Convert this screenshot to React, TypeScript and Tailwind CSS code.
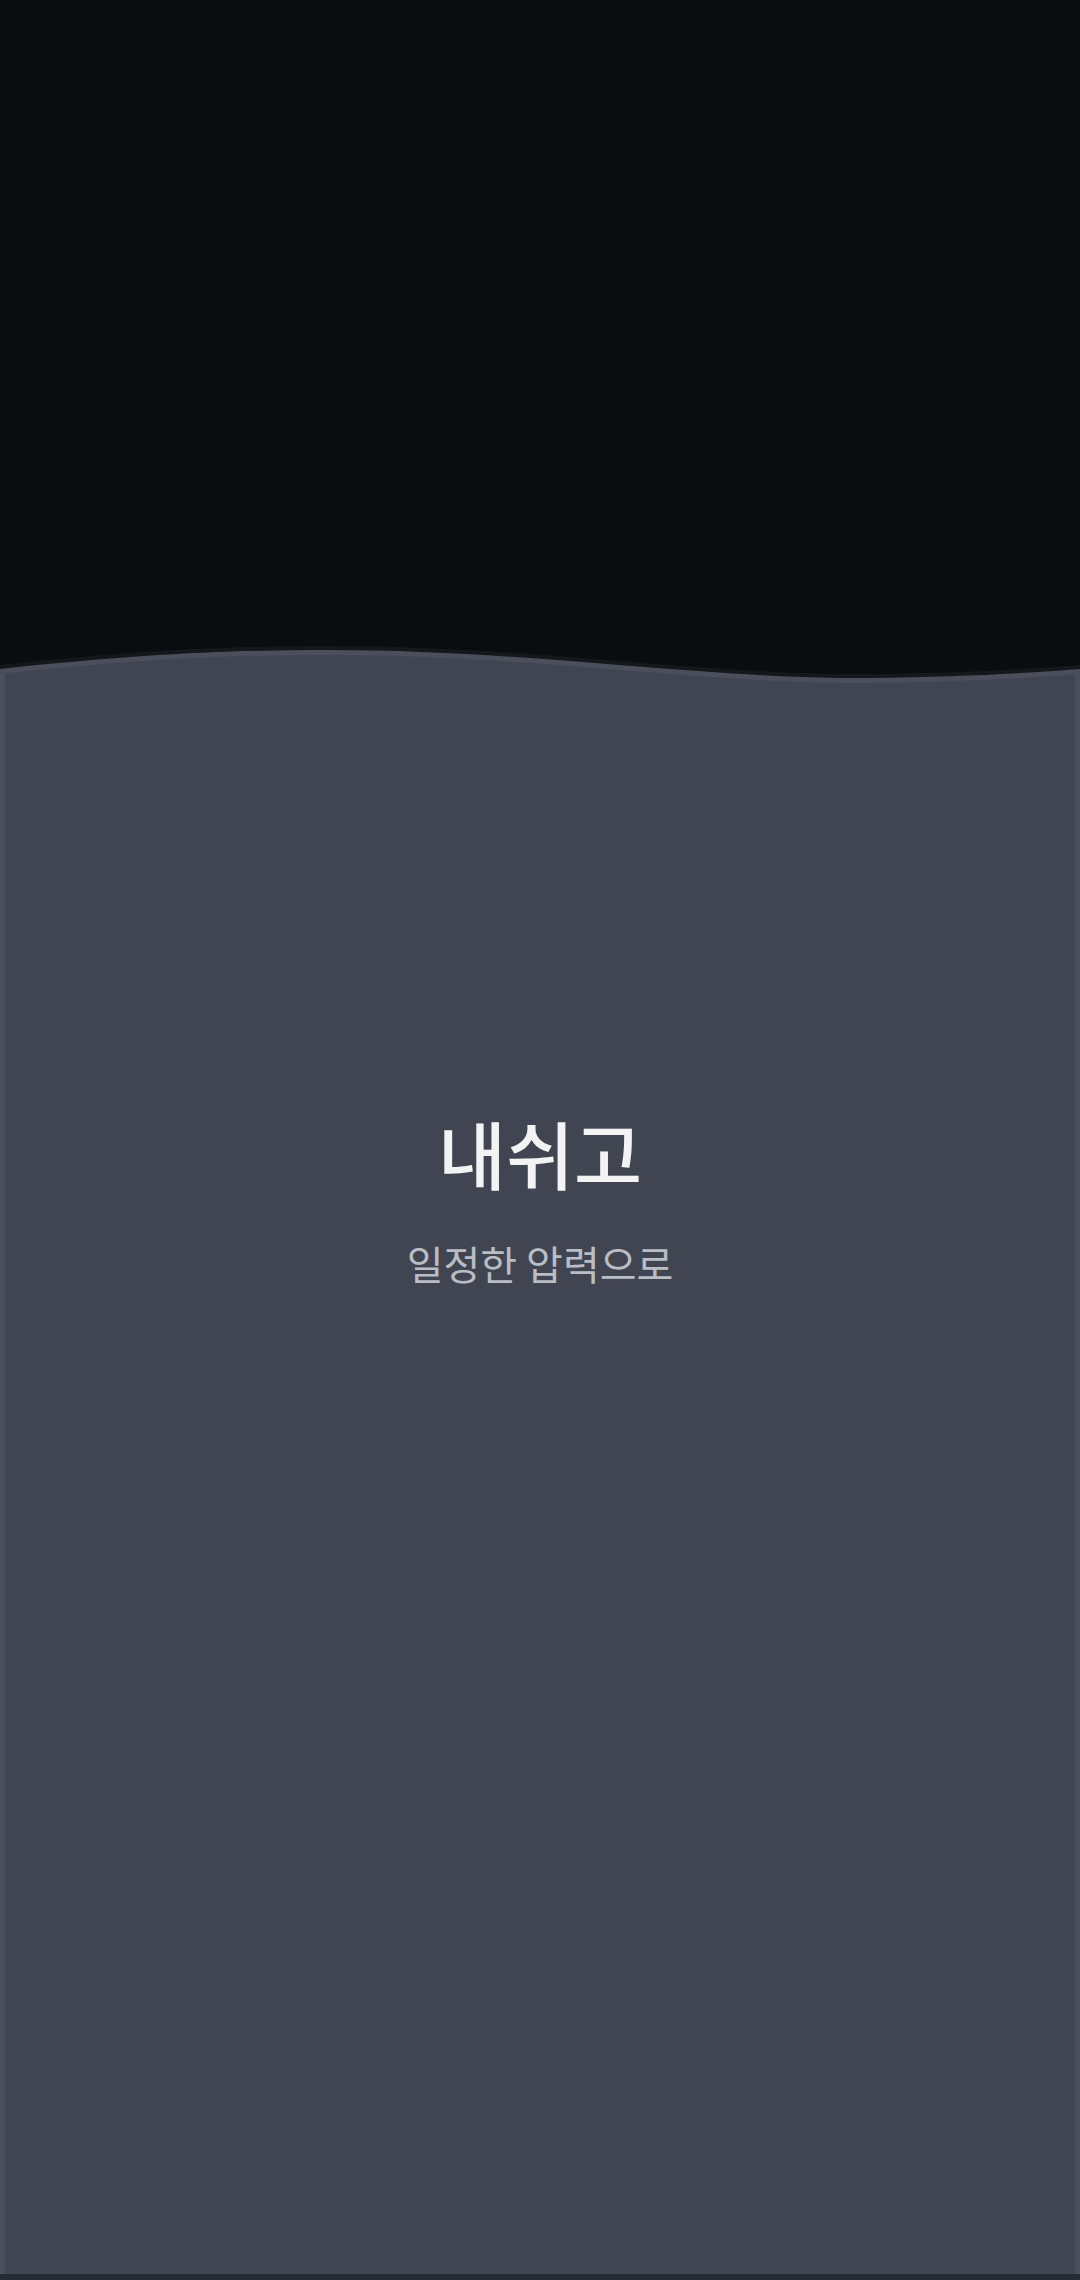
import React from "react";

const WAVE =
  "C150 7 240 4 330 4 C530 4 700 33 870 32 C960 31 1030 27 1080 23";
const ABOVE = `M0 -30 L0 23 ${WAVE} L1080 -30 Z`;

export default function App() {
  return (
    <div
      className="w-full h-[2280px] bg-[#0b0c0f] flex flex-col"
      style={{ fontFamily: '"Noto Sans CJK KR", "Noto Sans", sans-serif' }}
    >
      <div className="h-[642px] shrink-0" />
      <div className="relative flex-1 bg-[#404551] border-x-[5px] border-[#4a4f5b] flex flex-col items-center pt-[473px]">
        <svg
          className="absolute top-0 -left-[5px] w-[1080px] h-[45px] overflow-visible"
          viewBox="0 0 1080 45"
        >
          <path d={ABOVE} fill="#4a4f5b" transform="translate(0 9)" />
          <path d={ABOVE} fill="#15171a" transform="translate(0 4)" />
          <path d={ABOVE} fill="#0b0c0f" />
        </svg>
        <h1 className="text-[74px] leading-none font-medium text-[#f3f3f4] tracking-normal">
          내쉬고
        </h1>
        <p className="mt-[54px] text-[40px] leading-none text-[#babdc4]">
          일정한 압력으로
        </p>
      </div>
      <div className="h-[6px] shrink-0 bg-[#262a33]" />
    </div>
  );
}
